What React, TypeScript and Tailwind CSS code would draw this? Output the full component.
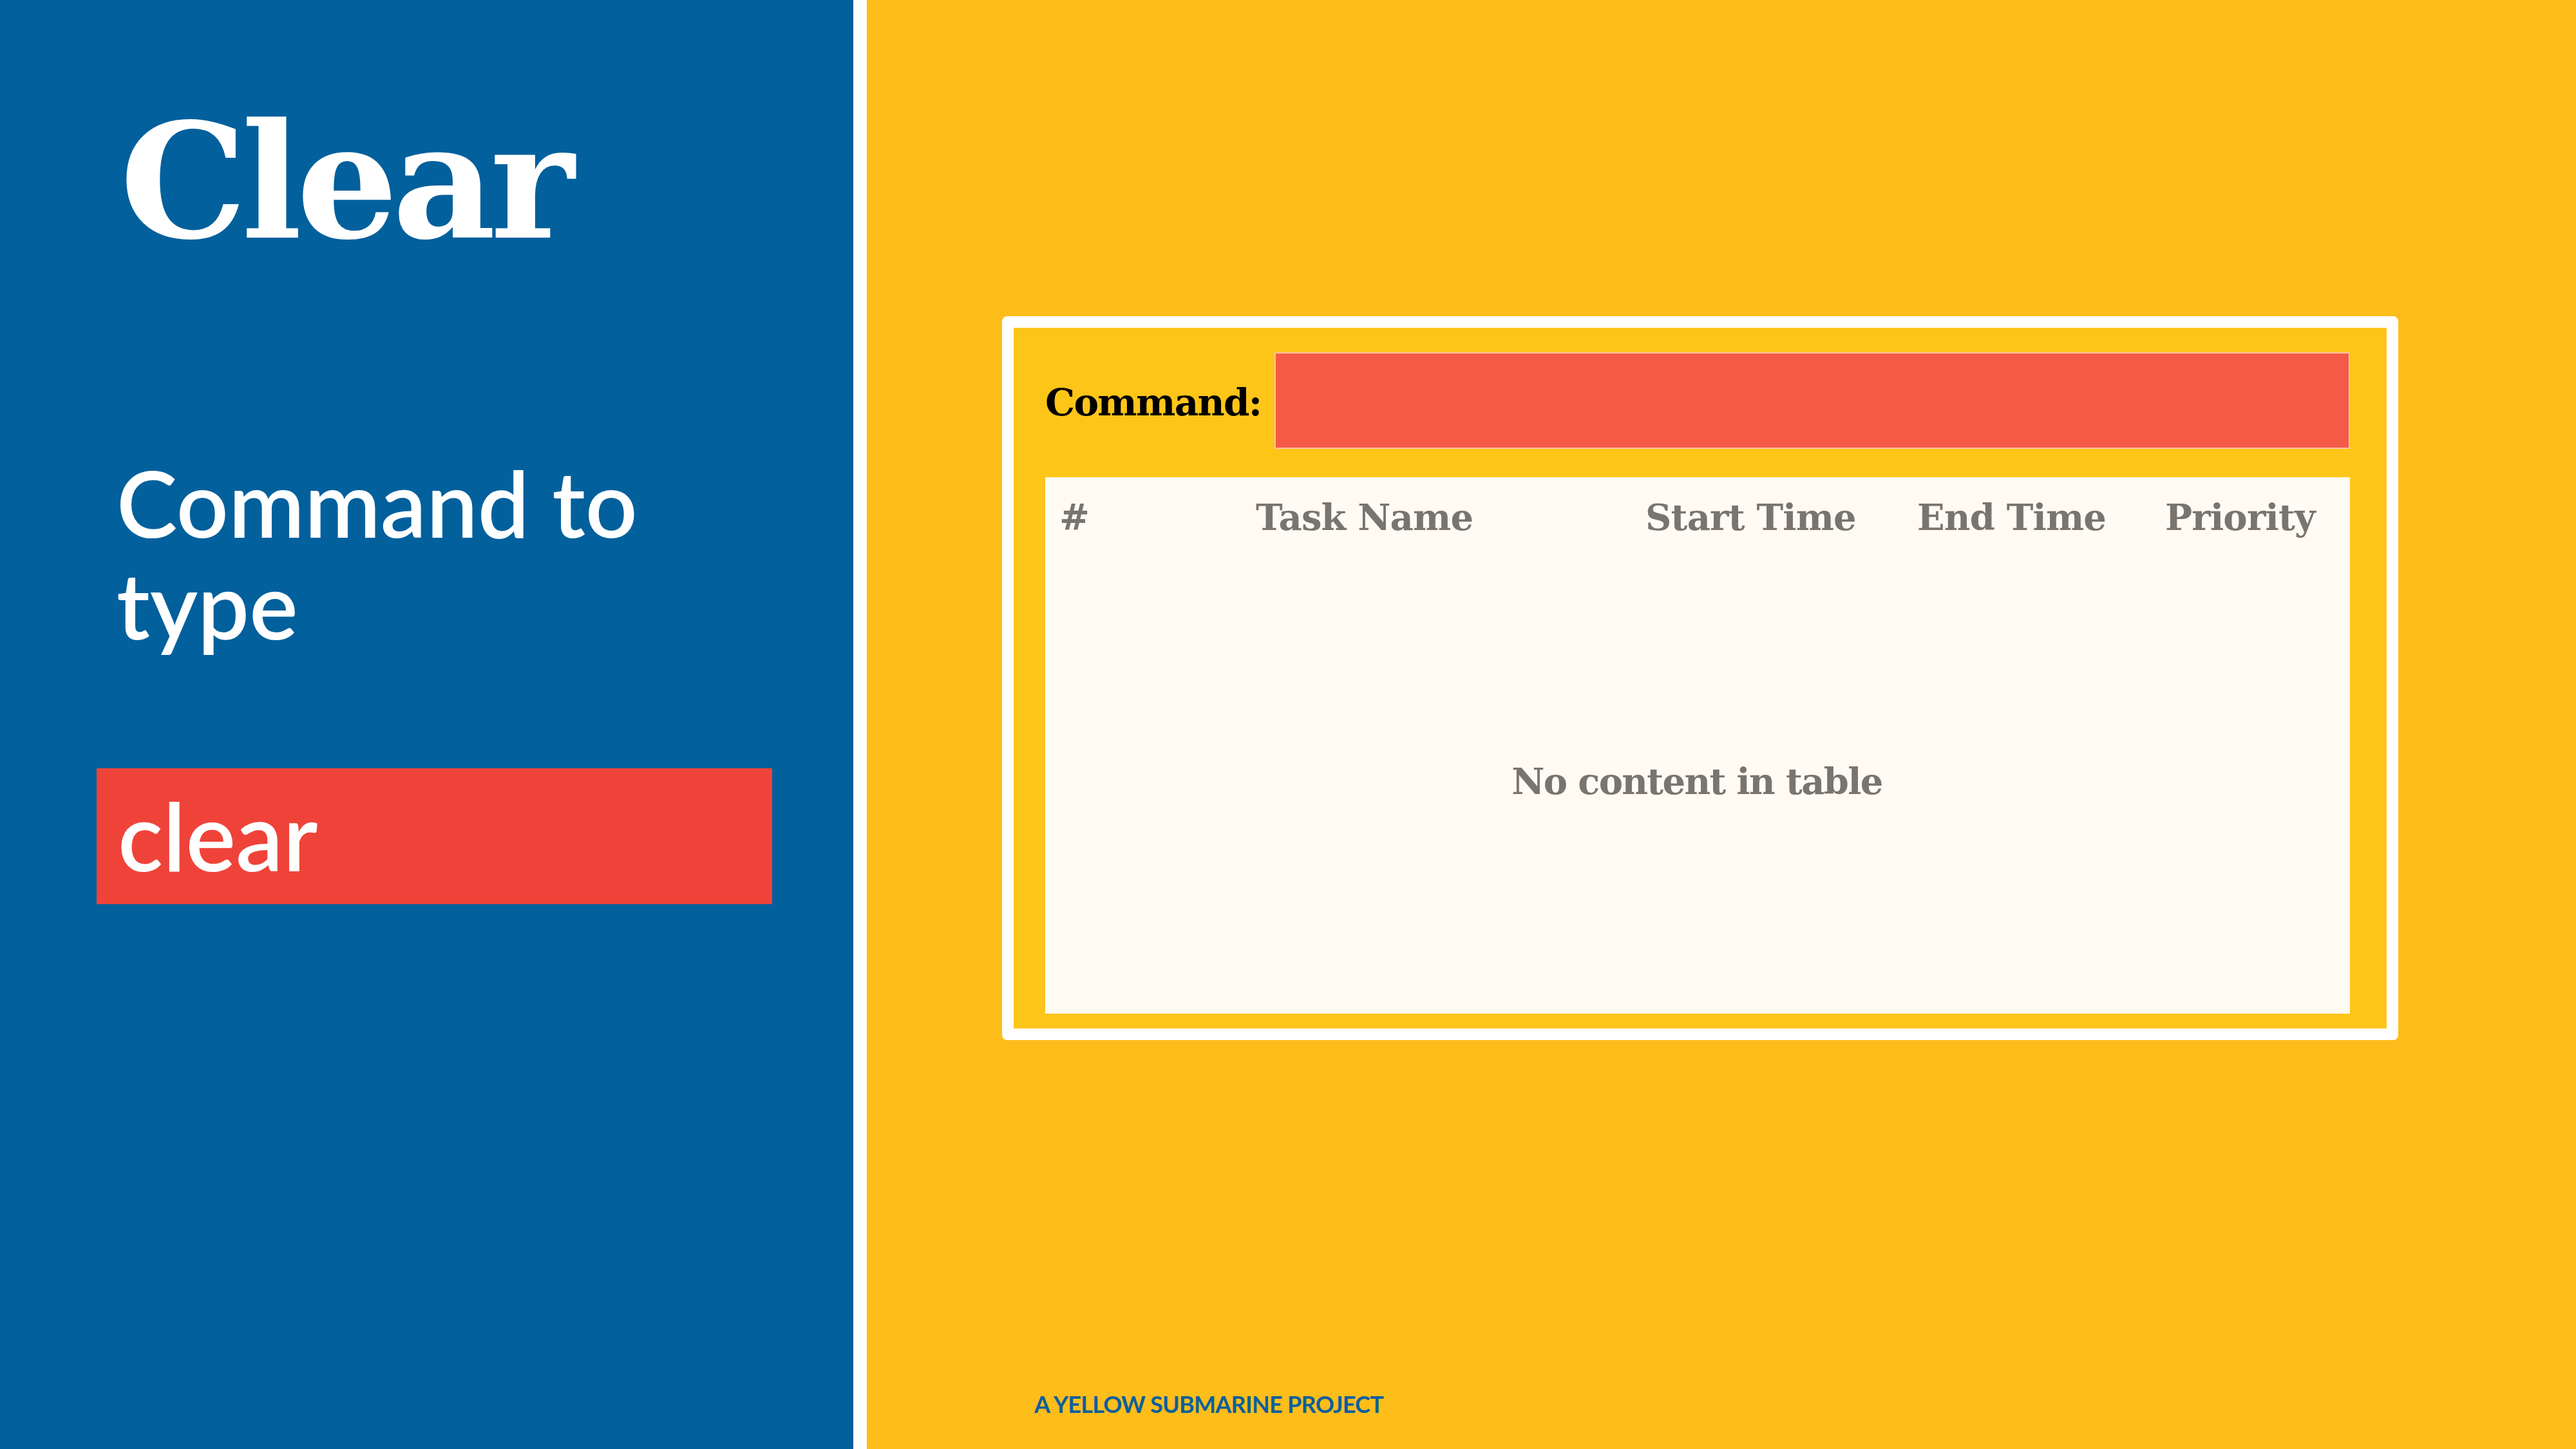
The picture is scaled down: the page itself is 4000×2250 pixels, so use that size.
import React from "react";

const serif = "font-['DejaVu_Serif',serif]";
const sans = "font-['Lato','Open_Sans',sans-serif]";

export default function App() {
  return (
    <div className="flex h-[2250px] w-[4000px] overflow-hidden">
      {/* Left panel */}
      <div className="flex w-[1325px] shrink-0 flex-col bg-[#02609c]">
        <div
          className={`${serif} ml-[186px] mt-[158px] text-[248px] font-bold leading-none tracking-[-0.035em] text-white`}
        >
          Clear
        </div>
        <div
          className={`${sans} ml-[181px] mt-[295px] text-[142px] font-semibold leading-[158px] text-white`}
        >
          <div>Command to</div>
          <div>type</div>
        </div>
        <div className="ml-[150px] mt-[176px] h-[211px] w-[1049px] bg-[#ef4339] pl-[33px] pt-[31px]">
          <div className={`${sans} text-[146px] font-semibold leading-none text-white`}>clear</div>
        </div>
      </div>

      {/* Divider */}
      <div className="w-[21px] shrink-0 bg-white" />

      {/* Right panel */}
      <div className="flex flex-1 flex-col bg-[#fdbd1b]">
        <div className="ml-[210px] mt-[491px] h-[1124px] w-[2168px] rounded-[8px] border-[18px] border-white bg-white">
          <div className="flex h-full w-full flex-col bg-[#fec519] pb-[23px] pl-[49px] pr-[57px] pt-[38px]">
            <div className="flex h-[150px] items-center">
              <div
                className={`${serif} w-[356px] shrink-0 pt-[6px] text-[58px] font-bold leading-none tracking-[-0.03em] text-black`}
              >
                Command:
              </div>
              <div className="h-[150px] flex-1 border-2 border-[#fbc0a3] bg-[#f55a47]" />
            </div>
            <div className="mt-[44px] flex flex-1 flex-col bg-[#fffaf2] pr-[2px]">
              <div
                className={`${serif} grid h-[110px] grid-cols-[305px_605px_422px_385px_1fr] pl-[22px] pt-[34px] text-[56px] font-bold leading-none tracking-[-0.015em] text-[#787570]`}
              >
                <div>#</div>
                <div>Task Name</div>
                <div>Start Time</div>
                <div>End Time</div>
                <div>Priority</div>
              </div>
              <div className="flex flex-1 items-center justify-center">
                <div
                  className={`${serif} text-[56px] font-bold leading-none tracking-[-0.03em] text-[#787570]`}
                >
                  No content in table
                </div>
              </div>
            </div>
          </div>
        </div>
        <div className="mt-auto pb-[52px] pl-[260px]">
          <div className={`${sans} text-[36px] font-bold leading-none tracking-[-0.02em] text-[#0b5f9c]`}>
            A YELLOW SUBMARINE PROJECT
          </div>
        </div>
      </div>
    </div>
  );
}
